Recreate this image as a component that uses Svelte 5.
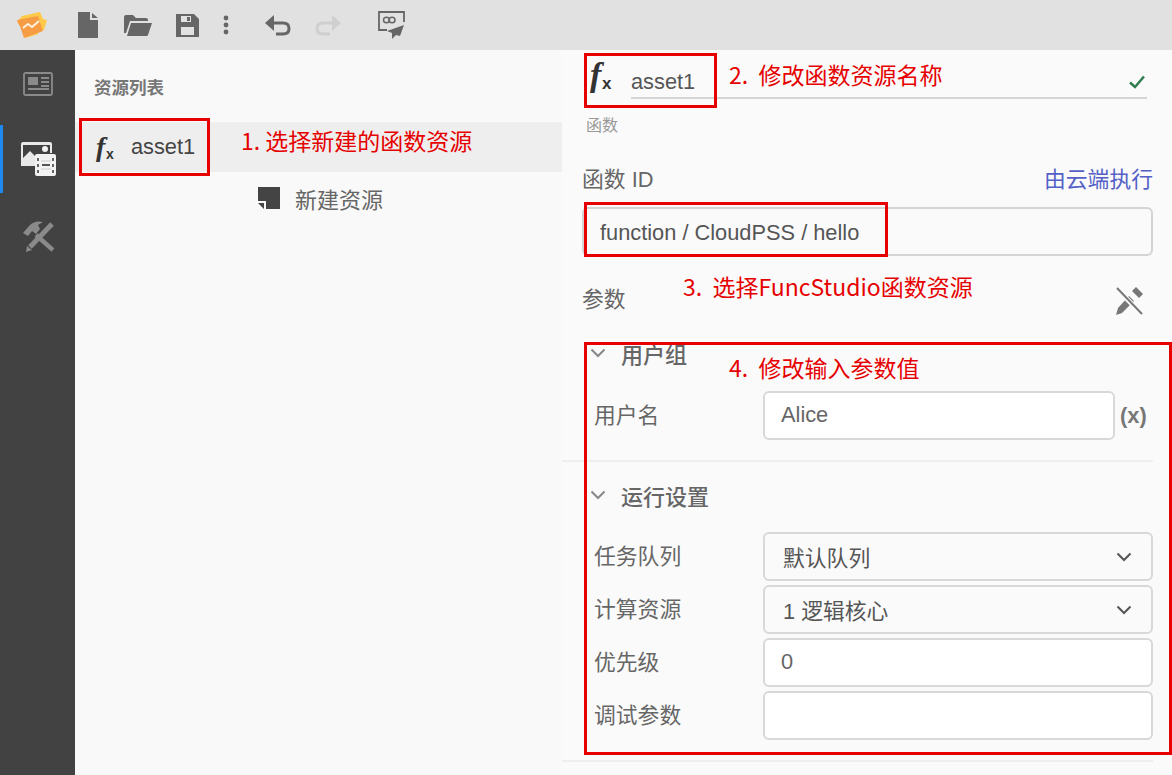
<script>
  const runRows = [
    { label: "任务队列", value: "默认队列", select: true },
    { label: "计算资源", value: "1 逻辑核心", select: true },
    { label: "优先级", value: "0", select: false },
    { label: "调试参数", value: "", select: false },
  ];

  const notes = [
    { cls: "n1", text: "1. 选择新建的函数资源" },
    { cls: "n2", text: "2.  修改函数资源名称" },
    { cls: "n3", text: "3.  选择FuncStudio函数资源" },
    { cls: "n4", text: "4.  修改输入参数值" },
  ];
</script>

{#snippet fx(size)}
  <span class="fx" style:font-size={`${size}px`}><i>f</i><b>x</b></span>
{/snippet}

{#snippet chevron(cls)}
  <svg class={cls} viewBox="0 0 16 10" width="16" height="10">
    <path d="M1.5 1.5 8 8l6.5-6.5" fill="none" stroke="currentColor" stroke-width="2" />
  </svg>
{/snippet}

<div class="page">
  <header class="topbar">
    <svg class="logo" viewBox="0 0 32 28" width="32" height="28">
      <path d="M6 5 24 1l3 7 4 1-3 10-5 1-1 3-12 4-3-9-6-7z" fill="#ffc94a" />
      <path d="M1 9 22 5l5 15-19 7-3-9z" fill="#f59c45" />
      <path d="M7 17l5-4 4 3 7-6" fill="none" stroke="#fff3df" stroke-width="2" />
    </svg>
    <svg class="file" viewBox="0 0 20 26" width="20" height="26">
      <path d="M0 0h12v8h8v18H0z M14 1l6 5h-6z" fill="#666" />
    </svg>
    <svg class="folder" viewBox="0 0 28 22" width="28" height="22">
      <path d="M0 3q0-2 2-2h7l3 3h10q2 0 2 2v1H6L2 19H0z M7 9h21l-4 12q-.3 1-2 1H3z" fill="#666" />
    </svg>
    <svg class="save" viewBox="0 0 23 23" width="23" height="23">
      <path fill-rule="evenodd" d="M0 0h18l5 5v18H0z M5 2v6h10V2z M11 3h3v4h-3z M5 13v8h13v-8z" fill="#666" />
    </svg>
    <svg class="dots" viewBox="0 0 6 20" width="6" height="20">
      <circle cx="3" cy="3" r="2.4" fill="#666" /><circle cx="3" cy="10" r="2.4" fill="#666" /><circle cx="3" cy="17" r="2.4" fill="#666" />
    </svg>
    <svg class="undo" viewBox="0 0 26 21" width="26" height="21">
      <path d="M2 8h16q6 0 6 5.500T18 19h-7" fill="none" stroke="#666" stroke-width="3" />
      <path d="M9 0v16L0 8z" fill="#666" />
    </svg>
    <svg class="redo" viewBox="0 0 26 21" width="26" height="21">
      <path d="M24 8H8q-6 0-6 5.500T8 19h7" fill="none" stroke="#cfcfcf" stroke-width="3" />
      <path d="M17 0v16l9-8z" fill="#cfcfcf" />
    </svg>
    <svg class="send" viewBox="0 0 27 28" width="27" height="28">
      <path d="M9 19H1V1h25v10" fill="none" stroke="#666" stroke-width="1.800" />
      <ellipse cx="8.500" cy="9" rx="3" ry="2.800" fill="none" stroke="#666" stroke-width="1.500" />
      <ellipse cx="14" cy="9" rx="3" ry="2.800" fill="none" stroke="#666" stroke-width="1.500" />
      <path d="M26 14 9 20l5 2 0 6 4-4 4 1z" fill="#666" />
    </svg>
  </header>

  <div class="body">
    <nav class="rail">
      <div class="rail-item">
        <svg viewBox="0 0 30 24" width="30" height="24">
          <rect x="1" y="1" width="28" height="22" rx="1.500" fill="none" stroke="#8a8a8a" stroke-width="1.800" />
          <rect x="5" y="5" width="10" height="8" fill="#8a8a8a" />
          <path d="M18 6h8M18 10h8M18 14h8M5 17h21" stroke="#8a8a8a" stroke-width="1.800" />
        </svg>
      </div>
      <div class="rail-item active">
        <svg viewBox="0 0 36 34" width="36" height="34">
          <path d="M1 2q0-2 2-2h27q2 0 2 2v9H15v13H1z" fill="#e9e9e9" />
          <path d="M3 3h27v8H15v3l-5-5-7 7z" fill="#424242" />
          <circle cx="25" cy="7" r="3" fill="#f2f2f2" />
          <rect x="15" y="12" width="21" height="22" rx="2" fill="#f2f2f2" />
          <path d="M22 23h8" stroke="#555" stroke-width="2" />
          <path d="M18 16v3M18 22v3M18 28v3M33 16v3M33 22v3M33 28v3" stroke="#666" stroke-width="2" />
          <path d="M21 19h10M21 27h10" stroke="#ccc" stroke-width="1" />
        </svg>
      </div>
      <div class="rail-item third">
        <svg viewBox="0 0 32 32" width="32" height="32">
          <path d="M1 13 8 5q5-5 13-3l-5 3 2 4-4 5-4-3-4 5z" fill="#8a8a8a" />
          <path d="M14 15l17 15" stroke="#8a8a8a" stroke-width="4.500" />
          <path d="M30 4 8 27" stroke="#8a8a8a" stroke-width="5" />
          <path d="M5 26l-1 6 6-2z" fill="#8a8a8a" />
        </svg>
      </div>
    </nav>

    <aside class="list">
      <h2>资源列表</h2>
      <div class="asset-row">
        {@render fx(28)}
        <span class="asset-name">asset1</span>
      </div>
      <div class="new-row">
        <svg viewBox="0 0 22 22" width="22" height="22">
          <path d="M0 0h22v22H8v-8H0z M0 16h6v6z" fill="#444" />
        </svg>
        <span>新建资源</span>
      </div>
    </aside>

    <main class="detail">
      <div class="title-row">
        {@render fx(34)}
        <div class="title-input">
          <span>asset1</span>
          <svg viewBox="0 0 16 14" width="16" height="14">
            <path d="M1 7.500 6 12 15 1.500" fill="none" stroke="#2e7d4f" stroke-width="2.500" />
          </svg>
        </div>
      </div>
      <div class="kind">函数</div>

      <div class="id-head">
        <span>函数 ID</span>
        <span class="link">由云端执行</span>
      </div>
      <div class="id-input">function / CloudPSS / hello</div>

      <div class="param-head">
        <span>参数</span>
        <svg viewBox="0 0 28 28" width="28" height="28">
          <path d="M17 4l4-4 7 7-4 4z" fill="#777" />
          <path d="M14 9l5 5L7 26l-6 2 2-7z" fill="#777" />
          <path d="M2 2l25 25" stroke="#fafafa" stroke-width="5" />
          <path d="M2 1l25 26" stroke="#777" stroke-width="2" />
        </svg>
      </div>

      <section class="group first">
        <h3>{@render chevron("group-chev")}用户组</h3>
        <div class="field">
          <label for="user">用户名</label>
          <div class="box plain short" id="user">Alice</div>
          <span class="var">(x)</span>
        </div>
      </section>

      <section class="group second">
        <h3>{@render chevron("group-chev")}运行设置</h3>
        {#each runRows as row}
          <div class="field tight">
            <span class="label">{row.label}</span>
            <div class="box" class:plain={!row.select}>
              <span>{row.value}</span>
              {#if row.select}
                {@render chevron("select-chev")}
              {/if}
            </div>
          </div>
        {/each}
      </section>
    </main>
  </div>

  <div class="mark m1"></div>
  <div class="mark m2"></div>
  <div class="mark m3"></div>
  <div class="mark m4"></div>
  {#each notes as note}
    <div class="note {note.cls}">{note.text}</div>
  {/each}
</div>

<style>
  :global(body) {
    margin: 0;
    overflow: hidden;
  }

  .page {
    position: relative;
    width: 1172px;
    height: 775px;
    overflow: hidden;
    display: flex;
    flex-direction: column;
    background: #fafafa;
    color: #666;
    font-family: "Liberation Sans", "Noto Sans CJK SC", sans-serif;
    font-size: 21.800px;
  }

  .topbar {
    flex: 0 0 50px;
    display: flex;
    align-items: center;
    padding-left: 16px;
    box-sizing: border-box;
    background: #e1e1e1;
  }

  .file { margin-left: 30px; }
  .folder { margin-left: 26px; }
  .save { margin-left: 24px; }
  .dots { margin-left: 24px; }
  .undo { margin-left: 36px; }
  .redo { margin-left: 24px; }
  .send { margin-left: 37px; }

  .body {
    flex: 1;
    display: flex;
    min-height: 0;
  }

  .rail {
    flex: 0 0 75px;
    background: #424242;
  }

  .rail-item {
    height: 68px;
    margin-bottom: 7px;
    display: flex;
    align-items: center;
    justify-content: center;
    box-sizing: border-box;
  }

  .rail-item.active {
    border-left: 3px solid #1e88ee;
    padding-right: 3px;
  }

  .rail-item.third {
    margin-top: 9px;
    margin-left: 1px;
  }

  .list {
    flex: 0 0 487px;
    background: #f9f9f9;
  }

  .list h2 {
    margin: 0 0 28px;
    padding: 28px 0 0 19px;
    height: 44px;
    box-sizing: border-box;
    line-height: 20px;
    font-size: 17.500px;
    font-weight: 700;
    color: #777;
  }

  .asset-row {
    height: 50px;
    display: flex;
    align-items: center;
    padding-left: 21px;
    background: #eee;
    color: #444;
  }

  .asset-name {
    margin-left: 15px;
  }

  .fx {
    display: inline-flex;
    align-items: flex-end;
    width: 0.71em;
    color: #333;
    font-family: "Liberation Serif", serif;
    line-height: 1;
  }

  .fx i {
    font-size: 1em;
    font-weight: 700;
  }

  .fx b {
    font-family: "Liberation Sans", sans-serif;
    font-size: 0.5em;
    margin-left: 0.04em;
  }

  .new-row {
    display: flex;
    align-items: center;
    gap: 15px;
    padding: 10px 0 0 183px;
    font-size: 22px;
  }

  .detail {
    flex: 1;
    min-width: 0;
    padding: 0 19px 0 20px;
  }

  .title-row {
    display: flex;
    align-items: center;
    height: 49px;
    padding: 0 6px 0 8px;
  }

  .title-row .fx {
    width: 41px;
  }

  .title-input {
    flex: 1;
    display: flex;
    justify-content: space-between;
    align-items: center;
    height: 49px;
    box-sizing: border-box;
    padding: 16px 2px 0 0;
    border-bottom: 2px solid #d4d4d4;
    color: #555;
  }

  .kind {
    margin: 15px 0 0 4px;
    font-size: 16px;
    line-height: 24px;
    color: #999;
  }

  .id-head {
    display: flex;
    justify-content: space-between;
    margin-top: 26px;
    line-height: 32px;
  }

  .link {
    color: #5361c7;
  }

  .id-input {
    margin-top: 11px;
    height: 49px;
    box-sizing: border-box;
    padding-left: 16px;
    border: 2px solid #d4d4d4;
    border-radius: 6px;
    line-height: 47px;
    color: #555;
  }

  .param-head {
    display: flex;
    justify-content: space-between;
    align-items: center;
    height: 32px;
    margin-top: 25px;
    padding-right: 10px;
  }

  .param-head svg {
    margin-top: 8px;
  }

  .group {
    margin-left: -20px;
    padding: 0 0 0 20px;
    border-bottom: 2px solid #eee;
    box-sizing: border-box;
  }

  .group h3 {
    display: flex;
    align-items: center;
    height: 32px;
    margin: 0;
    font-size: 22px;
    font-weight: 500;
  }

  .group.first {
    margin-top: 24px;
    height: 125px;
  }

  .group.second {
    height: 300px;
    padding-top: 17px;
  }

  .group.second h3 {
    margin-bottom: 21px;
  }

  .group-chev {
    margin: 0 15px 0 8px;
    color: #888;
  }

  .field {
    display: flex;
    align-items: center;
    padding-left: 12px;
    margin-top: 22px;
  }

  .field.tight {
    margin-top: 4px;
  }

  .field label,
  .label {
    flex: 0 0 169px;
    margin-top: -4px;
  }

  .box {
    flex: 1;
    height: 49px;
    box-sizing: border-box;
    display: flex;
    align-items: center;
    justify-content: space-between;
    padding: 0 19px 0 18px;
    border: 2px solid #d8d8d8;
    border-radius: 6px;
    background: #fafafa;
    color: #555;
  }

  .box.plain {
    padding-left: 16px;
    padding-bottom: 2px;
    background: #fff;
    color: #666;
  }

  .box.short {
    flex: 0 0 352px;
  }

  .var {
    margin-left: 5px;
    font-weight: 700;
    color: #777;
  }

  .mark {
    position: absolute;
    box-sizing: border-box;
    border: 3px solid #e60000;
  }

  .m1 { left: 79px; top: 118px; width: 131px; height: 58px; }
  .m2 { left: 584px; top: 53px; width: 133px; height: 55px; }
  .m3 { left: 584px; top: 202px; width: 304px; height: 55px; }
  .m4 { left: 584px; top: 342px; width: 588px; height: 413px; }

  .note {
    position: absolute;
    color: #e60000;
    font-family: "Noto Sans CJK SC", sans-serif;
    font-size: 23px;
    line-height: 30px;
    white-space: pre;
  }

  .n1 { left: 241px; top: 125px; }
  .n2 { left: 729px; top: 59px; }
  .n3 { left: 683px; top: 271px; }
  .n4 { left: 729px; top: 352px; }
</style>
